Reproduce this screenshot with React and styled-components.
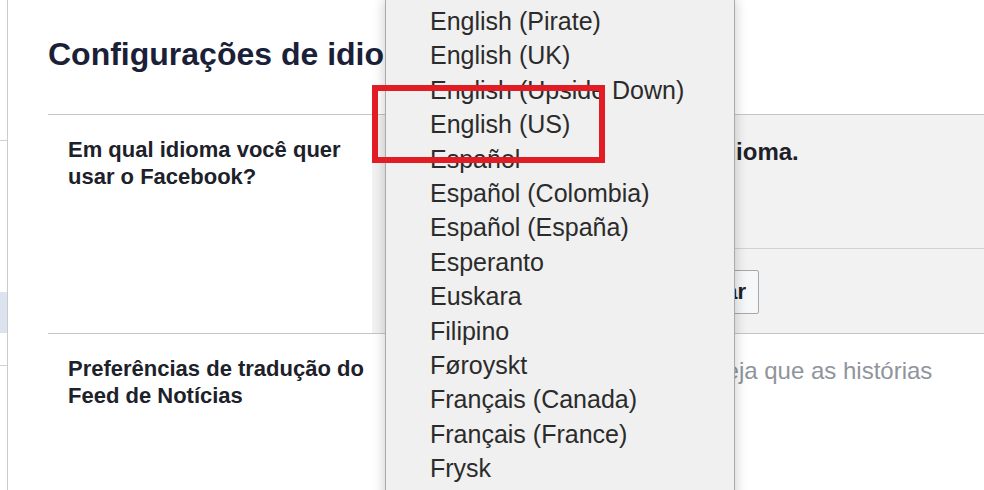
import React from 'react';
import styled, { createGlobalStyle } from 'styled-components';

const GlobalStyle = createGlobalStyle`
  html, body {
    margin: 0;
    padding: 0;
    background: #fff;
  }
  body {
    font-family: "Liberation Sans", Arial, Helvetica, sans-serif;
    overflow: hidden;
  }
  * {
    box-sizing: border-box;
  }
`;

const Page = styled.div`
  position: relative;
  display: flex;
  width: 984px;
  height: 490px;
  overflow: hidden;
  background: #fff;
`;

// -----------------------------------------------------------------------------------

const Sidebar = styled.div`
  width: 8px;
  flex-shrink: 0;
  display: flex;
  flex-direction: column;
  border-right: 1px solid #cacaca;
`;

const NavItem = styled.div`
  height: ${p => p.h}px;
  flex-shrink: 0;
  background: ${p => (p.active ? '#dde2ef' : 'transparent')};
  border-bottom: ${p => (p.line ? '1px solid #d0d0d0' : 'none')};
`;

// -----------------------------------------------------------------------------------

const Main = styled.div`
  flex: 1;
  display: flex;
  flex-direction: column;
  padding-left: 40px;
`;

const Title = styled.h2`
  margin: 36px 0 42px 0;
  font-size: 32px;
  line-height: 36px;
  font-weight: bold;
  color: #1b1f38;
  white-space: nowrap;
`;

const Section = styled.div`
  display: flex;
  border-top: 1px solid #c4c4c4;
  flex-shrink: 0;
  flex-grow: ${p => (p.last ? 1 : 0)};
`;

const Label = styled.div`
  width: 324px;
  flex-shrink: 0;
  padding: 21px 0 0 20px;
  font-size: 22px;
  line-height: 27px;
  font-weight: bold;
  color: #1d2129;
  background: #fff;
`;

const Value = styled.div`
  flex: 1;
  padding: 23px 0 ${p => (p.editing ? 19 : 0)}px 20px;
  background: ${p => (p.editing ? '#f2f2f2' : '#fff')};
  display: flex;
  flex-direction: column;
`;

const Heading = styled.div`
  font-size: 24px;
  line-height: 27px;
  font-weight: bold;
  color: #1d2129;
  white-space: nowrap;
`;

const Hint = styled.div`
  font-size: 24px;
  line-height: 27px;
  color: #90949c;
  white-space: nowrap;
`;

const SelectBox = styled.div`
  margin-top: 12px;
  width: 300px;
  height: 40px;
  border: 1px solid #bdc1c9;
  background: #fff;
`;

const ButtonRow = styled.div`
  display: flex;
  gap: 8px;
  margin-top: 31px;
  padding: 21px 0 0 33px;
  border-top: 1px solid #d2d2d2;
`;

const Button = styled.button`
  height: 44px;
  padding: 0 12px;
  font-family: inherit;
  font-size: 22px;
  font-weight: bold;
  border-radius: 2px;
  border: 1px solid ${p => (p.primary ? '#4267b2' : '#a8a8a8')};
  background: ${p => (p.primary ? '#4267b2' : '#f6f7f9')};
  color: ${p => (p.primary ? '#fff' : '#1d2129')};
`;

// -----------------------------------------------------------------------------------

const Dropdown = styled.ul`
  position: absolute;
  left: 385px;
  top: 0;
  width: 350px;
  height: 500px;
  margin: 0;
  padding: 4px 0 0 0;
  list-style: none;
  background: #f0f0f0;
  border-left: 1px solid #aaa;
  border-right: 1px solid #aaa;
  box-shadow: 0 0 12px rgba(0, 0, 0, 0.22);
`;

const Option = styled.li`
  height: 34.4px;
  padding-left: 44px;
  font-size: 25px;
  line-height: 34.4px;
  color: #2b2b2b;
  white-space: nowrap;
`;

const Highlight = styled.div`
  position: absolute;
  left: 372px;
  top: 85px;
  width: 233px;
  height: 78px;
  border: 6px solid #e21c25;
  pointer-events: none;
`;

const languages = [
  'English (Pirate)',
  'English (UK)',
  'English (Upside Down)',
  'English (US)',
  'Español',
  'Español (Colombia)',
  'Español (España)',
  'Esperanto',
  'Euskara',
  'Filipino',
  'Føroyskt',
  'Français (Canada)',
  'Français (France)',
  'Frysk',
];

export default function App() {
  return (
    <Page>
      <GlobalStyle />
      <Sidebar>
        <NavItem h={141} line />
        <NavItem h={151} />
        <NavItem h={41} active />
        <NavItem h={33} line />
      </Sidebar>
      <Main>
        <Title>Configurações de idioma</Title>
        <Section>
          <Label>Em qual idioma você quer usar o Facebook?</Label>
          <Value editing>
            <Heading>Quero ler o Facebook neste idioma.</Heading>
            <SelectBox />
            <ButtonRow>
              <Button primary>Salvar alterações</Button>
              <Button>Cancelar</Button>
            </ButtonRow>
          </Value>
        </Section>
        <Section last>
          <Label>Preferências de tradução do Feed de Notícias</Label>
          <Value>
            <Hint>Selecione o idioma no qual deseja que as histórias</Hint>
          </Value>
        </Section>
      </Main>
      <Dropdown>
        {languages.map(lang => (
          <Option key={lang}>{lang}</Option>
        ))}
      </Dropdown>
      <Highlight />
    </Page>
  );
}
